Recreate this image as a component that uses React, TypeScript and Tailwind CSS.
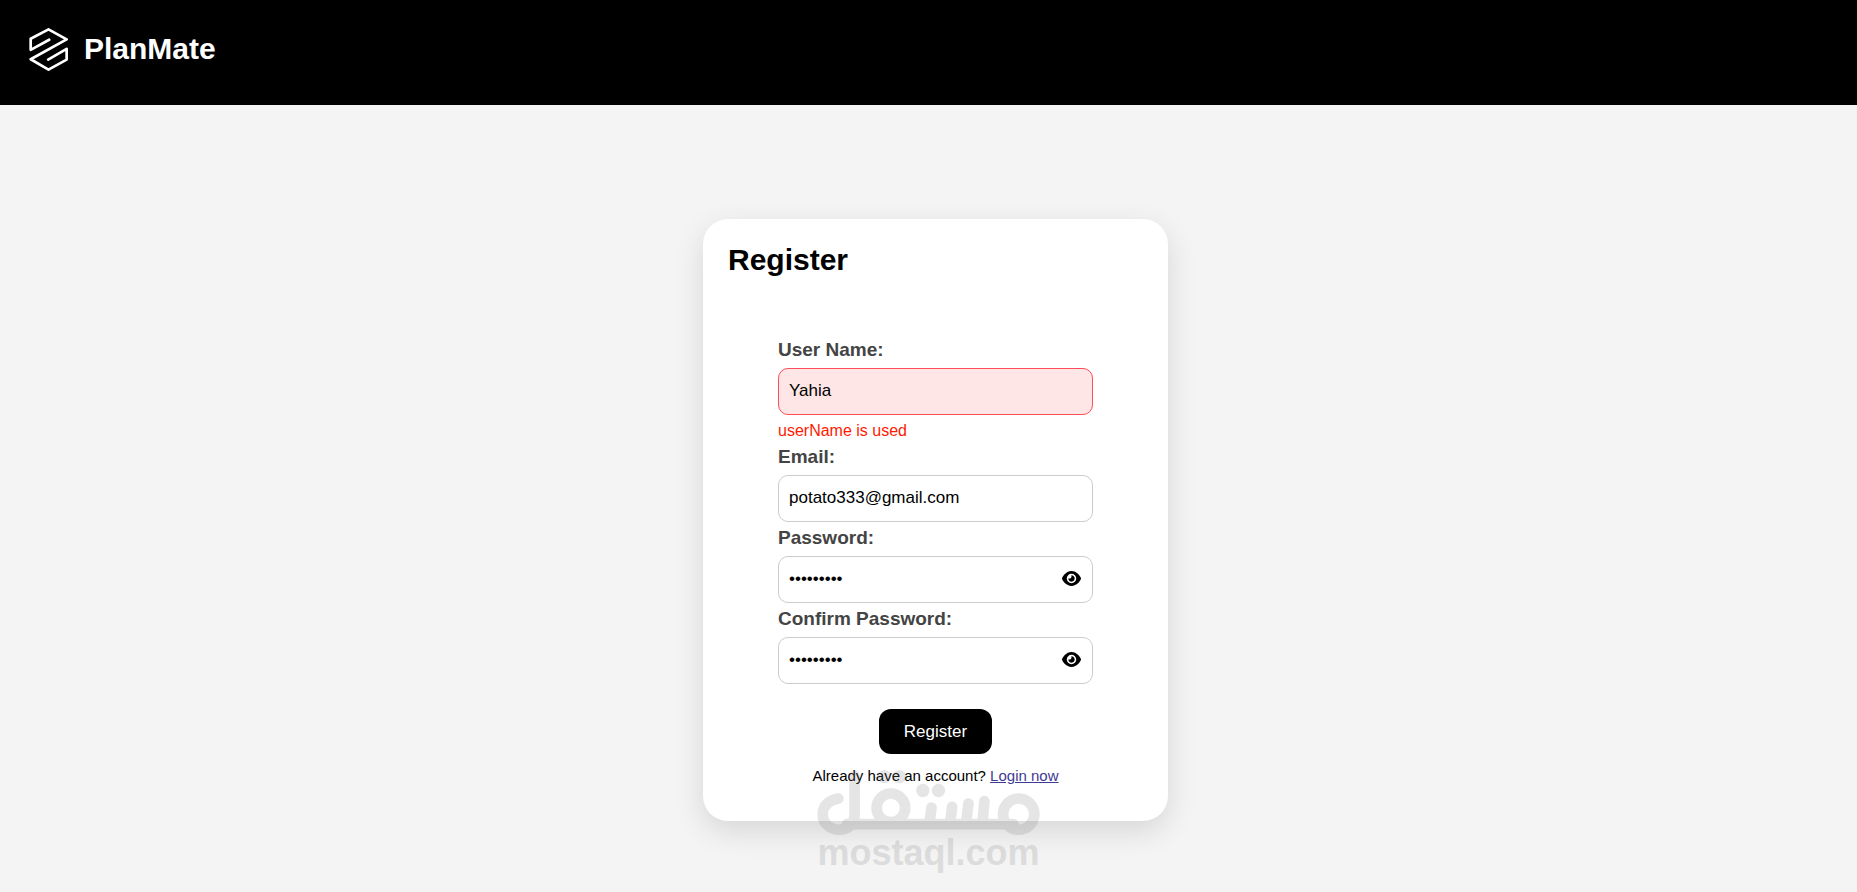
import React, { useState } from 'react';
import { FaEye } from 'react-icons/fa6';
import clsx from 'clsx';

type FieldProps = {
  id: string;
  label: string;
  type?: string;
  value: string;
  onChange: (value: string) => void;
  error?: string;
};

function Logo() {
  return (
    <svg viewBox="0 0 116 128" className="h-[43px] w-[39px]" fill="none" aria-hidden="true">
      <path
        d="M60 35 L5 65 V32 L58 4 L112 34 L5 93 L58 124 L112 94 V62 L57 94"
        stroke="white"
        strokeWidth="8"
        strokeLinejoin="round"
        strokeLinecap="round"
      />
    </svg>
  );
}

function Field({ id, label, type = 'text', value, onChange, error }: FieldProps) {
  const [visible, setVisible] = useState(false);
  const isPassword = type === 'password';

  return (
    <div className="flex flex-col">
      <label htmlFor={id} className="mt-[5px] mb-[7px] text-[19px] leading-[22px] font-bold text-[#444]">
        {label}
      </label>
      <div className="relative">
        <input
          id={id}
          type={isPassword && visible ? 'text' : type}
          value={value}
          onChange={(e) => onChange(e.target.value)}
          className={clsx(
            'block h-[47px] w-full rounded-[10px] border px-2.5 pb-0.5 text-[17px] text-black outline-none',
            error ? 'border-[#ff4d5a] bg-[#ffe6e6]' : 'border-[#ccc] bg-white'
          )}
        />
        {isPassword && (
          <button
            type="button"
            aria-label={visible ? 'Hide password' : 'Show password'}
            onClick={() => setVisible(!visible)}
            className="absolute inset-y-0 right-3 flex cursor-pointer items-center pb-0.5 text-black"
          >
            <FaEye size={19} />
          </button>
        )}
      </div>
      {error && <p className="mt-[5px] text-base leading-[21px] text-[#ff1a00]">{error}</p>}
    </div>
  );
}

function Watermark() {
  return (
    <div className="pointer-events-none absolute inset-x-0 bottom-[22px] flex flex-col items-center opacity-20">
      <svg viewBox="110 240 670 200" className="h-[67px] w-[223px]" aria-hidden="true">
        <g fill="none" stroke="#808080" strokeWidth="32" strokeLinecap="round">
          <path d="M174 328 C145 333 127 350 127 376 C127 402 150 422 176 422 C204 422 223 404 223 376 V260" />
          <path d="M200 405 H700" />
          <circle cx="332" cy="356" r="43" />
          <path d="M454 355 L448 400 M516 353 L510 400 M565 343 L558 400 M613 336 L607 400" />
          <circle cx="716" cy="375" r="47" />
        </g>
        <g fill="#808080">
          <circle cx="312" cy="262" r="20" />
          <circle cx="358" cy="262" r="20" />
          <circle cx="428" cy="304" r="20" />
          <circle cx="475" cy="304" r="20" />
        </g>
      </svg>
      <span className="text-4xl leading-[34px] font-bold text-[#808080]">mostaql.com</span>
    </div>
  );
}

export default function App() {
  const [userName, setUserName] = useState('Yahia');
  const [email, setEmail] = useState('potato333@gmail.com');
  const [password, setPassword] = useState('potato333');
  const [confirm, setConfirm] = useState('potato333');

  return (
    <div className="relative flex min-h-screen flex-col bg-[#f4f4f4] font-['Liberation_Sans',Arial,sans-serif] text-black">
      <header className="flex h-[105px] items-start gap-4 bg-black px-[29px] pt-7">
        <Logo />
        <span className="text-[30px] leading-[42px] font-bold text-white">PlanMate</span>
      </header>

      <main className="flex justify-center pt-[114px] pl-[14px]">
        <section className="w-full max-w-[465px] rounded-[25px] bg-white px-[25px] pt-[25px] pb-[35px] shadow-[0_10px_30px_rgba(0,0,0,0.12)]">
          <h1 className="text-[30px] leading-8 font-bold">Register</h1>

          <form className="mt-[58px] flex flex-col px-[50px]" onSubmit={(e) => e.preventDefault()}>
            <Field id="userName" label="User Name:" value={userName} onChange={setUserName} error="userName is used" />
            <Field id="email" label="Email:" type="email" value={email} onChange={setEmail} />
            <Field id="password" label="Password:" type="password" value={password} onChange={setPassword} />
            <Field id="confirm" label="Confirm Password:" type="password" value={confirm} onChange={setConfirm} />

            <button
              type="submit"
              className="mt-[25px] h-[45px] cursor-pointer self-center rounded-xl bg-black px-[25px] text-[17px] text-white"
            >
              Register
            </button>
          </form>

          <p className="mt-3 text-center text-[15px] leading-5">
            Already have an account?{' '}
            <a href="#login" className="text-[#3f3a93] underline">
              Login now
            </a>
          </p>
        </section>
      </main>

      <Watermark />
    </div>
  );
}
